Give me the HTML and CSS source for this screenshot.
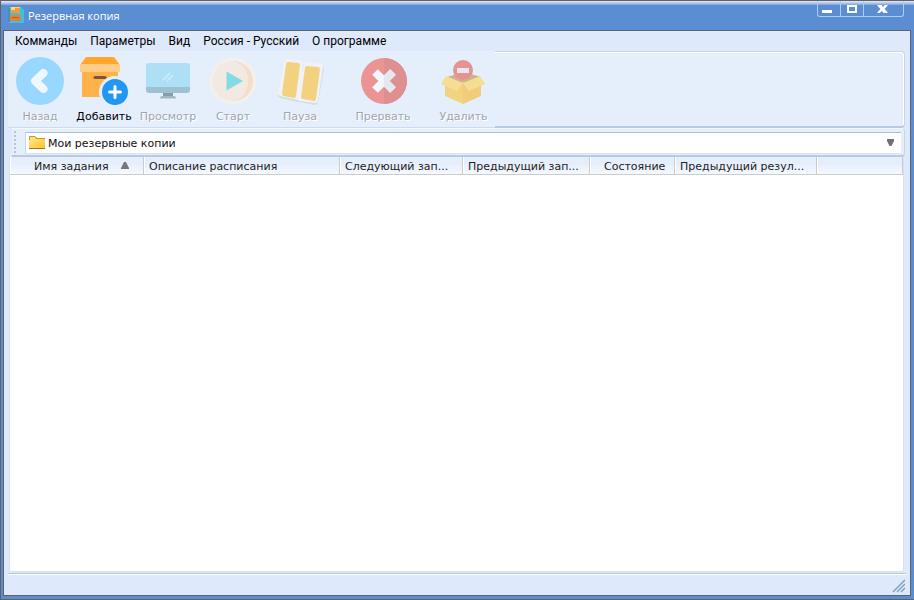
FILE: index.html
```
<!DOCTYPE html>
<html lang="ru">
<head>
<meta charset="utf-8">
<title>Резервная копия</title>
<link rel="stylesheet" href="styles.css">
</head>
<body>
<div class="window">
  <header class="titlebar">
    <svg class="app-icon" width="16" height="16" viewBox="0 0 16 16" aria-hidden="true">
      <path fill="#35c3e6" d="M1 0h12l3 3v13H1z"/>
      <path fill="#4a8fb0" d="M0 1h2v14H0z"/>
      <path fill="#ffd65c" d="M3 0h9v6H3z"/>
      <path fill="#f39a3c" d="M3 3h4V1h5v5H3z"/>
      <path fill="#ffe08a" d="M4 0h2v2H4z"/>
      <path fill="#f07c2e" d="M2 8h11v6H2z"/>
      <path fill="#a8683c" d="M4 10h7v1H4z"/>
    </svg>
    <h1 class="title">Резервная копия</h1>
    <div class="controls">
      <button class="control" aria-label="Свернуть"><svg width="22" height="16" viewBox="0 0 22 16"><path fill="#fff" d="M4 9h10v3H4z"/></svg></button>
      <button class="control" aria-label="Развернуть"><svg width="22" height="16" viewBox="0 0 22 16"><path fill="#fff" fill-rule="evenodd" d="M6 4h10v8H6zM8 6v4h6V6z"/></svg></button>
      <button class="control close" aria-label="Закрыть"><svg width="38" height="16" viewBox="0 0 38 16"><path fill="#fff" d="M13 4h4l1.500 2L20 4h3v1l-3 3 3 3v1h-4l-1.500-2L15 12h-2v-1l3-3-3-3z"/></svg></button>
    </div>
  </header>
  <div class="client">
    <nav class="menu">
      <a href="#">Комманды</a>
      <a href="#">Параметры</a>
      <a href="#">Вид</a>
      <a href="#">Россия - Русский</a>
      <a href="#">О программе</a>
    </nav>
    <div class="toolbar">
      <div class="tools">
        <button class="tool" disabled>
          <svg width="52" height="52" viewBox="0 0 52 52"><circle cx="26" cy="26" r="24" fill="#98d7ff"/><path d="M29.500 18 21 26l8.500 8" fill="none" stroke="#f0f7ff" stroke-width="8" stroke-linecap="round" stroke-linejoin="round"/></svg>
          <span>Назад</span>
        </button>
        <button class="tool">
          <svg width="52" height="52" viewBox="0 0 52 52"><path fill="#ffb24a" d="M4 16h36v26H4z"/><path fill="#ffa62b" d="M8 2h28l6 8H2z"/><path fill="#ffcd85" d="M2 9h40v7q0 1-1 1H3q-1 0-1-1z"/><path stroke="#795548" stroke-width="3" stroke-linecap="round" d="M17 22.500h10"/><circle cx="37" cy="37" r="16" fill="#e5effc"/><circle cx="37" cy="37" r="13" fill="#2196f3"/><path stroke="#fff" stroke-width="3" stroke-linecap="round" d="M31.500 37h11M37 31.500v11"/></svg>
          <span>Добавить</span>
        </button>
        <button class="tool" disabled>
          <svg width="52" height="52" viewBox="0 0 52 52"><path fill="#879dac" d="M21 37h10v5H21z"/><path fill="#a2b5c2" d="M20 41h12q2 0 2 2.500H18q0-2.500 2-2.500z"/><path fill="#9fc0d0" d="M4 31h44v4q0 3-3 3H7q-3 0-3-3z"/><path fill="#ade0f7" d="M4 32V11q0-3 3-3h38q3 0 3 3v21z"/><path fill="none" stroke="#cfeefd" stroke-width="1.500" d="m21 25 7-7M25 26l6-6"/></svg>
          <span>Просмотр</span>
        </button>
        <button class="tool" disabled>
          <svg width="52" height="52" viewBox="0 0 52 52"><circle cx="26" cy="26" r="23.500" fill="#f2f0ed"/><circle cx="26" cy="26" r="20" fill="#f1dfca"/><path fill="#f2e9e2" d="M26 6a20 20 0 0 0 0 40C37 44 41 35 41 26S37 9 26 6z"/><path fill="#82dce5" d="M19.500 16.500v19L36 26z"/></svg>
          <span>Старт</span>
        </button>
        <button class="tool" disabled>
          <svg width="52" height="52" viewBox="0 0 52 52"><g fill="#d3dce8" stroke="#d3dce8" stroke-width="6" stroke-linejoin="round"><path d="m14 9 12 1-2 34-17-4zM33 12l14 2-6 33-15-3z"/></g><g fill="#f0f2f8" stroke="#f0f2f8" stroke-width="6" stroke-linejoin="round"><path d="m13 7 13 1-2 34-17-4zM33 10l13 2-5 33-15-2z"/></g><g fill="#f2d27e" stroke="#f2d27e" stroke-width="4" stroke-linejoin="round"><path d="m14 9 10 1-4 31-10-2zM33 13l11 1-4 30-11-2z"/></g></svg>
          <span>Пауза</span>
        </button>
        <button class="tool" disabled>
          <svg width="52" height="52" viewBox="0 0 52 52"><circle cx="27" cy="26" r="23" fill="#ec9493"/><path fill="#de9090" d="M27 3a23 23 0 0 1 0 46z"/><path fill="none" stroke="#f1f7ff" stroke-width="8" d="m18 17 18 18M36 17 18 35"/><path fill="#e4e9f0" d="m27 20.500 6.200-6.300 5.600 5.600-6.200 6.200 6.200 6.200-5.600 5.600-6.200-6.300z"/></svg>
          <span>Прервать</span>
        </button>
        <button class="tool" disabled>
          <svg width="52" height="52" viewBox="0 0 52 52"><path fill="#d0b18c" d="m9 22 17-5 17 5-17 7z"/><circle cx="25" cy="15" r="10" fill="#e69294"/><path fill="#e5e8f1" d="M19 13h12v5H19z"/><path fill="#f2d480" d="m7 28 18-1v22L7 41z"/><path fill="#f0cd78" d="m25 27 18 1v13l-18 8z"/><path fill="#f4de94" d="m8 21 17 7-6 8-16-7zM42 21l-17 7 6 8 16-7z"/></svg>
          <span>Удалить</span>
        </button>
      </div>
      <div class="toolbar-rest"></div>
    </div>
    <div class="location">
      <div class="grip"></div>
      <div class="combo">
        <svg width="19" height="16" viewBox="0 0 19 16" aria-hidden="true"><defs><linearGradient id="fold" x2="1" y2="1"><stop stop-color="#ffe88c"/><stop offset="1" stop-color="#ffc12b"/></linearGradient></defs><path fill="#c9962e" d="M0 2q0-1 1-1h5l2 2h8v11H0z"/><path fill="#ffe37c" d="M1 2h5l1 2h8v9H1z"/><path fill="url(#fold)" d="M0 5h8l2-1h6v9H0z"/><path stroke="#9e7624" d="M0 13.500h16"/></svg>
        <select class="combo-select" aria-label="Папка"><option>Мои резервные копии</option></select>
        <svg class="combo-arrow" width="9" height="7" viewBox="0 0 9 7" aria-hidden="true"><path fill="#707070" d="M1 0h7v2L5.500 7h-2L1 2z"/></svg>
      </div>
    </div>
    <main class="list">
      <table class="jobs">
        <colgroup><col class="c-name"><col class="c-desc"><col class="c-next"><col class="c-prev"><col class="c-state"><col class="c-result"><col></colgroup>
        <thead>
          <tr>
            <th class="name">Имя задания<svg class="sort" width="8" height="7" viewBox="0 0 8 7" aria-hidden="true"><path fill="#777" d="M3 0h2l3 6v1H0V6z"/></svg></th>
            <th>Описание расписания</th>
            <th>Следующий зап...</th>
            <th>Предыдущий зап...</th>
            <th class="state">Состояние</th>
            <th>Предыдущий резул...</th>
            <th></th>
          </tr>
        </thead>
        <tbody></tbody>
      </table>
    </main>
    <footer class="status">
      <svg width="14" height="14" viewBox="0 0 14 14" aria-hidden="true"><path fill="none" stroke="#fff" stroke-width="1" d="M2 13 14 1M6 13l8-8M10 13l4-4"/><path fill="none" stroke="#7e9cbd" stroke-width="1.500" d="M1 13 13 1M5 13l8-8M9 13l4-4"/></svg>
    </footer>
  </div>
</div>
</body>
</html>
```
FILE: styles.css
```
* { box-sizing: border-box; }

body {
  margin: 0;
  background: #5a8dd2;
  font: 11px/14px "DejaVu Sans", Verdana, sans-serif;
  color: #222;
}

button { margin: 0; border: 0; padding: 0; background: none; font: inherit; color: inherit; }

.window {
  display: flex;
  flex-direction: column;
  min-height: 100vh;
  padding: 0 3px 3px;
  background: #5a8dd2;
  border: 1px solid #606268;
  border-width: 1px 0 1px 1px;
}

.titlebar {
  display: flex;
  align-items: flex-start;
  height: 29px;
  margin: 0 -3px;
  padding: 0 10px 0 7px;
  background: linear-gradient(#e4ebf8 0, #b5c8ea 2px, #7ea3dc 4px, #5a8dd2 4px);
}
.app-icon { margin-top: 6px; }
.title {
  flex: 1;
  margin: 6px 0 0 4px;
  font: 11px/18px "Open Sans", Tahoma, sans-serif;
  color: #fff;
}
.controls {
  display: flex;
  border: 1px solid #a9cdf3;
  border-top: 0;
  border-radius: 0 0 3px 3px;
}
.control { display: block; height: 15px; }
.control + .control { border-left: 1px solid #a9cdf3; }
.control svg { display: block; }
.close svg { width: 39px; }

.client {
  flex: 1;
  display: flex;
  flex-direction: column;
  border: 1px solid #606268;
  border-left-width: 0;
  background: #deeafb;
  box-shadow: -1px 0 #606268;
}

.menu {
  display: flex;
  gap: 13px;
  height: 20px;
  padding: 0 11px;
  font: 12px/20px Roboto, Tahoma, sans-serif;
}
.menu a { color: #000; text-decoration: none; white-space: nowrap; }

.toolbar { display: flex; margin: 0 5px 0 4px; height: 77px; }
.tools {
  display: grid;
  grid-template-columns: 64px 64px 64px 66px 68px 98px 63px;
  background: #e5effc;
  border-bottom: 1px solid #cfdbea;
}
.tool {
  display: flex;
  flex-direction: column;
  align-items: center;
  padding-top: 4px;
  color: #000;
}
.tool span { line-height: 16px; margin-top: 2px; }
.tool svg { display: block; }
.tool:disabled { color: #a2a5aa; text-shadow: 1px 1px #fff; }
.toolbar-rest {
  flex: 1;
  background: #e5effc;
  border: 1px solid #c9d5e6;
  border-left: 0;
  border-bottom: 2px solid #b8cae2;
  border-radius: 0 4px 4px 0;
  box-shadow: inset -1px 1px #fff;
}

.location {
  display: flex;
  align-items: center;
  height: 29px;
  margin: 0 5px 0 8px;
  padding: 1px 3px 0 0;
  background: #e5effc;
  border-top: 1px solid #f4f8fe;
  border-bottom: 2px solid #b8cae2;
  border-right: 1px solid #c9d5e6;
  border-radius: 0 4px 4px 0;
}
.grip {
  width: 2px;
  height: 23px;
  margin: 0 9px 0 2px;
  background: repeating-linear-gradient(#bcc4cf 0 2px, transparent 2px 4px);
}
.combo {
  flex: 1;
  display: flex;
  align-items: center;
  height: 22px;
  padding: 0 6px 0 3px;
  background: #fff;
  border-top: 1px solid #a9c0dd;
  border-left: 1px solid #c9d8eb;
  border-bottom: 1px solid #d9e3ef;
}
.combo-select {
  flex: 1;
  appearance: none;
  border: 0;
  padding: 2px 0 0;
  background: none;
  color: #111;
  font: inherit;
}
.combo-arrow { pointer-events: none; }

.list {
  flex: 1;
  margin: 0 6px 0 5px;
  border: 1px solid #d5e1f0;
  border-top: 0;
  background: #fff;
}
.jobs { width: 100%; table-layout: fixed; border-collapse: separate; border-spacing: 0; }
.c-name { width: 134px; }
.c-desc { width: 196px; }
.c-next { width: 123px; }
.c-prev { width: 127px; }
.c-state { width: 85px; }
.c-result { width: 142px; }
.jobs th {
  height: 18px;
  padding: 3px 0 0 5px;
  background: linear-gradient(#e5effc 40%, #f5f9ff);
  border-right: 1px solid #ccc;
  border-bottom: 1px solid #ccc;
  box-shadow: inset 1px 0 #fff;
  font-weight: normal;
  text-align: left;
  white-space: nowrap;
}
.jobs .name { padding-left: 24px; }
.jobs .state { padding-left: 14px; }
.sort { margin-left: 12px; vertical-align: 1px; }

.status {
  display: flex;
  justify-content: flex-end;
  align-items: flex-end;
  height: 22px;
  margin: 1px 4px 0;
  padding-bottom: 2px;
  border-top: 1px solid #b7c5d8;
  box-shadow: inset 0 1px #fff;
}
```
